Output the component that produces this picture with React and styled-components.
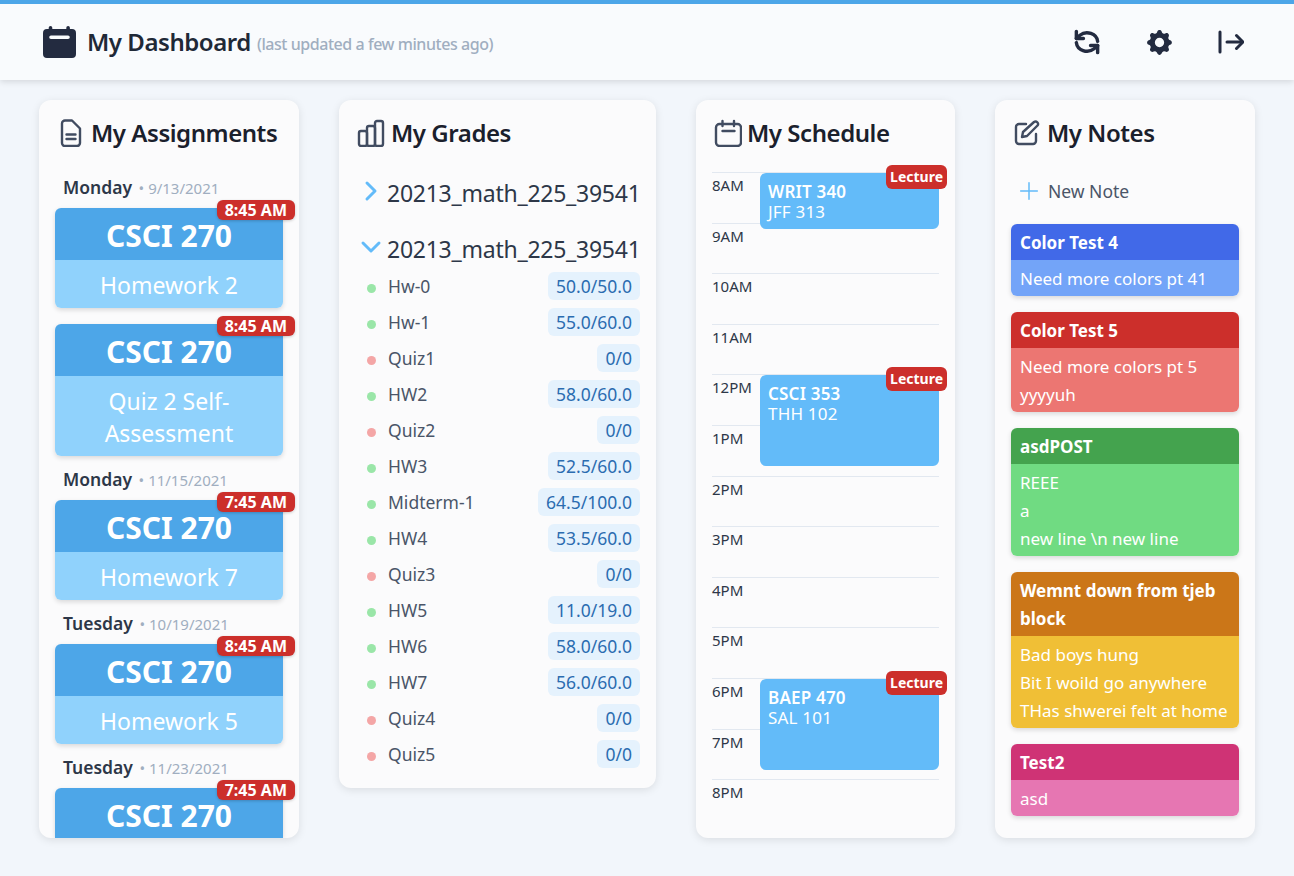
import React from "react";
import styled, { createGlobalStyle } from "styled-components";
import { HiCog } from "react-icons/hi";

const GlobalStyle = createGlobalStyle`
  html, body { margin: 0; padding: 0; }
  body {
    background: #f2f6fb;
    font-family: "Noto Sans", "Liberation Sans", sans-serif;
    color: #2d3748;
  }
`;

const Page = styled.div`
  width: 1294px;
  height: 876px;
  overflow: hidden;
  background: #f2f6fb;
`;

const Header = styled.header`
  height: 76px;
  border-top: 4px solid #4da6e8;
  background: #f9fbfd;
  box-shadow: 0 2px 6px rgba(0, 0, 0, 0.12);
  display: flex;
  align-items: center;
  justify-content: space-between;
  padding: 0 50px 0 43px;
`;

const Brand = styled.div`
  display: flex;
  align-items: center;
`;

const BrandTitle = styled.h1`
  margin: 0 0 2px 11px;
  font-size: 24px;
  font-weight: 600;
  letter-spacing: -0.45px;
  color: #1f2937;
`;

const BrandNote = styled.span`
  margin: 3px 0 0 6px;
  font-size: 16px;
  font-weight: 500;
  letter-spacing: -0.45px;
  color: #a0aec0;
`;

const Actions = styled.div`
  display: flex;
  align-items: center;
  gap: 46px;
  color: #232b40;
`;

const Columns = styled.main`
  display: grid;
  grid-template-columns: 260px 317px 259px 260px;
  gap: 40px;
  align-items: start;
  padding: 20px 39px 0;
`;

const Panel = styled.section`
  background: #fbfbfc;
  border-radius: 12px;
  box-shadow: 0 2px 8px rgba(0, 0, 0, 0.1);
  overflow: hidden;
  height: ${(p) => p.$height}px;
  padding: 18px 16px 0;
  box-sizing: border-box;
`;

const PanelTitle = styled.h2`
  margin: 0;
  height: 32px;
  box-sizing: border-box;
  padding-bottom: 2px;
  display: flex;
  align-items: center;
  gap: ${(p) => p.$gap || 7}px;
  font-size: 24px;
  font-weight: 600;
  line-height: 30px;
  letter-spacing: -0.45px;
  white-space: nowrap;
  color: #1a202c;
`;

const IconSlot = styled.span`
  display: flex;
  flex-shrink: 0;
  margin-left: ${(p) => p.$left || 0}px;
  color: #414c61;
`;

const DateRow = styled.div`
  height: 24px;
  line-height: 24px;
  margin: ${(p) => (p.$first ? "25px" : "-5px")} 0 9px 8px;
  font-size: 17.5px;
  font-weight: 600;
  color: #2d3748;
  white-space: nowrap;
`;

const DateText = styled.span`
  margin-left: 2px;
  font-size: 15px;
  font-weight: 400;
  color: #a0aec0;
`;

const TaskCard = styled.div`
  position: relative;
  margin-bottom: 16px;
  border-radius: 6px;
  box-shadow: 0 2px 5px rgba(0, 0, 0, 0.14);
  text-align: center;
  color: #fff;
`;

const TaskCourse = styled.div`
  padding: 4.5px 8px 3.5px;
  height: 44px;
  line-height: 46px;
  background: #4da6e8;
  border-radius: 6px 6px 0 0;
  font-size: 30px;
  font-weight: 700;
`;

const TaskName = styled.div`
  padding: 9px 8px 7px;
  background: #90d2fc;
  border-radius: 0 0 6px 6px;
  font-size: 23px;
  line-height: 32px;
`;

const TimeBadge = styled.span`
  position: absolute;
  z-index: 1;
  top: -8px;
  right: -12px;
  height: 20px;
  line-height: 20px;
  padding: 0 8px;
  border-radius: 6px;
  background: #cc2f2b;
  color: #fff;
  font-size: 16px;
  font-weight: 700;
  white-space: nowrap;
  box-shadow: 0 1px 3px rgba(0, 0, 0, 0.2);
`;

const CourseRow = styled.div`
  display: flex;
  align-items: center;
  height: 40px;
  margin-top: ${(p) => p.$top}px;
  font-size: 23px;
  letter-spacing: -0.25px;
  color: #2d3748;
  white-space: nowrap;
`;

const Chevron = styled.span`
  display: flex;
  flex-shrink: 0;
  justify-content: center;
  width: 32px;
  margin-bottom: 4px;
  color: #63bbf9;
`;

const GradeList = styled.div`
  display: flex;
  flex-direction: column;
  gap: 8px;
  margin-top: 3px;
`;

const GradeRow = styled.div`
  display: flex;
  align-items: center;
  height: 28px;
  font-size: 17.5px;
  color: #4a5568;
`;

const Dot = styled.span`
  width: 9px;
  height: 9px;
  margin: 5px 12px 0 12px;
  border-radius: 50%;
  background: ${(p) => (p.$ok ? "#9ae6a8" : "#f4a6a6")};
`;

const Score = styled.span`
  margin-left: auto;
  padding: 0 8px;
  line-height: 28px;
  border-radius: 6px;
  background: #e5f2fd;
  color: #2b6cb0;
`;

const Timeline = styled.div`
  position: relative;
  margin-top: 22px;
`;

const HourRow = styled.div`
  height: 50.6px;
  box-sizing: border-box;
  border-top: 1px solid #e2e8f0;
  font-size: 15px;
  line-height: 24px;
  color: #2d3748;
`;

const Lesson = styled.div`
  position: absolute;
  top: ${(p) => p.$top}px;
  left: 48px;
  right: 0;
  height: ${(p) => p.$height}px;
  box-sizing: border-box;
  padding: 9px 8px;
  background: #63bbf9;
  border-radius: 6px;
  color: #fff;
  font-size: 17px;
  letter-spacing: 0.2px;
  line-height: 20px;
`;

const LessonName = styled.div`
  font-weight: 600;
`;

const LectureBadge = styled.span`
  position: absolute;
  top: -8px;
  right: -8px;
  height: 24px;
  line-height: 24px;
  padding: 0 4px;
  border-radius: 6px;
  background: #cc2f2b;
  font-size: 14px;
  font-weight: 700;
  letter-spacing: 0;
`;

const NewNote = styled.div`
  display: flex;
  align-items: center;
  gap: 9px;
  height: 24px;
  margin: 29px 0 21px 8px;
  font-size: 17.5px;
  color: #4a5568;
`;

const PlusIcon = styled.span`
  display: flex;
  color: #63bbf9;
`;

const NoteCard = styled.div`
  margin-bottom: 16px;
  border-radius: 6px;
  overflow: hidden;
  box-shadow: 0 2px 5px rgba(0, 0, 0, 0.14);
  color: #fff;
  font-size: 17px;
  line-height: 28px;
`;

const NoteHead = styled.div`
  padding: 5px 8px 3px 9px;
  font-weight: 700;
  background: ${(p) => p.$color};
`;

const NoteBody = styled.div`
  padding: 5px 8px 3px 9px;
  background: ${(p) => p.$color};
  white-space: nowrap;
`;

const Icon = ({ w, h, vb, sw = 2, children }) => (
  <svg width={w} height={h} viewBox={vb} fill="none" stroke="currentColor" strokeWidth={sw} strokeLinecap="round" strokeLinejoin="round">
    {children}
  </svg>
);

const tasks = [
  { day: "Monday", date: "9/13/2021", time: "8:45 AM", name: "Homework 2" },
  { time: "8:45 AM", name: "Quiz 2 Self-Assessment" },
  { day: "Monday", date: "11/15/2021", time: "7:45 AM", name: "Homework 7" },
  { day: "Tuesday", date: "10/19/2021", time: "8:45 AM", name: "Homework 5" },
  { day: "Tuesday", date: "11/23/2021", time: "7:45 AM" },
];

const grades = [
  ["Hw-0", "50.0/50.0", 1], ["Hw-1", "55.0/60.0", 1], ["Quiz1", "0/0", 0], ["HW2", "58.0/60.0", 1],
  ["Quiz2", "0/0", 0], ["HW3", "52.5/60.0", 1], ["Midterm-1", "64.5/100.0", 1], ["HW4", "53.5/60.0", 1],
  ["Quiz3", "0/0", 0], ["HW5", "11.0/19.0", 1], ["HW6", "58.0/60.0", 1], ["HW7", "56.0/60.0", 1],
  ["Quiz4", "0/0", 0], ["Quiz5", "0/0", 0],
];

const hours = ["8AM", "9AM", "10AM", "11AM", "12PM", "1PM", "2PM", "3PM", "4PM", "5PM", "6PM", "7PM", "8PM"];

const lessons = [
  { name: "WRIT 340", room: "JFF 313", top: 1, height: 56 },
  { name: "CSCI 353", room: "THH 102", top: 203, height: 91 },
  { name: "BAEP 470", room: "SAL 101", top: 507, height: 91 },
];

const notes = [
  { title: "Color Test 4", lines: ["Need more colors pt 41"], head: "#4169e8", body: "#73a4f8" },
  { title: "Color Test 5", lines: ["Need more colors pt 5", "yyyyuh"], head: "#cc2f2b", body: "#ec7672" },
  { title: "asdPOST", lines: ["REEE", "a", "new line \\n new line"], head: "#44a34e", body: "#70db82" },
  { title: "Wemnt down from tjeb block", lines: ["Bad boys hung", "Bit I woild go anywhere", "THas shwerei felt at home"], head: "#cb7618", body: "#f0bf36" },
  { title: "Test2", lines: ["asd"], head: "#cf3375", body: "#e676b2" },
];

export default function App() {
  return (
    <Page>
      <GlobalStyle />
      <Header>
        <Brand>
          <svg width="33" height="32" viewBox="0 0 33 32">
            <path fill="#232b40" fillRule="evenodd" d="M7.500 0A1.800 1.800 0 0 1 9.300 1.800V3h14V1.800a1.800 1.800 0 0 1 3.600 0V3H29a4 4 0 0 1 4 4v21a4 4 0 0 1-4 4H4a4 4 0 0 1-4-4V7a4 4 0 0 1 4-4h1.700V1.800A1.800 1.800 0 0 1 7.500 0zM8 9.500a1.800 1.800 0 0 0 0 3.600h17a1.800 1.800 0 0 0 0-3.600z" />
          </svg>
          <BrandTitle>My Dashboard</BrandTitle>
          <BrandNote>(last updated a few minutes ago)</BrandNote>
        </Brand>
        <Actions>
          <Icon w={26} h={28} vb="1 1 22 22" sw={2.9}>
            <path d="M3 3v6h6" />
            <path d="M21 11.500A9 8 0 0 0 6 6.300L3 9" />
            <path d="M21 21v-6h-6" />
            <path d="M3 12.500a9 8 0 0 0 15 5.200l3-2.700" />
          </Icon>
          <HiCog size={31} style={{ margin: "0 -2.500px" }} />
          <Icon w={26} h={24} vb="0 0 26 24" sw={3}>
            <path d="M2 2v20" />
            <path d="M9 12h15" />
            <path d="M18.500 5.500L25 12l-6.500 6.500" />
          </Icon>
        </Actions>
      </Header>
      <Columns>
        <Panel $height={738}>
          <PanelTitle $gap={9}>
            <IconSlot $left={5}>
              <Icon w={22} h={28} vb="0 0 22 28" sw={2.4}>
                <path d="M5 1.500h7l8 8v14.500a3 3 0 0 1-3 3H5a3 3 0 0 1-3-3V4.500a3 3 0 0 1 3-3z" />
                <path d="M6.500 15.500h9M6.500 20h9" />
              </Icon>
            </IconSlot>
            My Assignments
          </PanelTitle>
          {tasks.map((task, i) => (
            <React.Fragment key={i}>
              {task.day && (
                <DateRow $first={i === 0}>
                  {task.day} <DateText>• {task.date}</DateText>
                </DateRow>
              )}
              <TaskCard>
                <TimeBadge>{task.time}</TimeBadge>
                <TaskCourse>CSCI 270</TaskCourse>
                {task.name && <TaskName>{task.name}</TaskName>}
              </TaskCard>
            </React.Fragment>
          ))}
        </Panel>
        <Panel $height={688}>
          <PanelTitle $gap={6}>
            <IconSlot $left={2}>
              <Icon w={28} h={28} vb="0 0 28 28" sw={2.4}>
                <rect x="2" y="12" width="8" height="15" rx="2" />
                <rect x="10" y="7" width="8" height="20" rx="2" />
                <rect x="18" y="2" width="8" height="25" rx="2" />
              </Icon>
            </IconSlot>
            My Grades
          </PanelTitle>
          <CourseRow $top={23}>
            <Chevron>
              <Icon w={24} h={24} vb="0 0 24 24" sw={3}><path d="M8 4l8 8-8 8" /></Icon>
            </Chevron>
            20213_math_225_39541
          </CourseRow>
          <CourseRow $top={16}>
            <Chevron>
              <Icon w={24} h={24} vb="0 0 24 24" sw={3}><path d="M4 8l8 8 8-8" /></Icon>
            </Chevron>
            20213_math_225_39541
          </CourseRow>
          <GradeList>
            {grades.map(([name, score, ok]) => (
              <GradeRow key={name}>
                <Dot $ok={ok} />
                {name}
                <Score>{score}</Score>
              </GradeRow>
            ))}
          </GradeList>
        </Panel>
        <Panel $height={738}>
          <PanelTitle $gap={5}>
            <IconSlot $left={2}>
              <Icon w={28} h={28} vb="0 0 28 28" sw={2.4}>
                <rect x="2" y="5" width="25" height="22" rx="3.500" />
                <path d="M8.500 2v5M20 2v5M8.500 12h12" />
              </Icon>
            </IconSlot>
            My Schedule
          </PanelTitle>
          <Timeline>
            {hours.map((h) => (
              <HourRow key={h}>{h}</HourRow>
            ))}
            {lessons.map((l) => (
              <Lesson key={l.name} $top={l.top} $height={l.height}>
                <LectureBadge>Lecture</LectureBadge>
                <LessonName>{l.name}</LessonName>
                {l.room}
              </Lesson>
            ))}
          </Timeline>
        </Panel>
        <Panel $height={738}>
          <PanelTitle $gap={7}>
            <IconSlot $left={3}>
              <Icon w={26} h={26} vb="0 0 26 26" sw={2.4}>
                <path d="M12 4H5a3 3 0 0 0-3 3v14a3 3 0 0 0 3 3h14a3 3 0 0 0 3-3v-7" />
                <path d="M20 2a2.500 2.500 0 0 1 3.500 3.500L13 16l-5 1 1-5z" />
              </Icon>
            </IconSlot>
            My Notes
          </PanelTitle>
          <NewNote>
            <PlusIcon>
              <Icon w={20} h={20} vb="0 0 24 24" sw={1.8}><path d="M12 2v20M2 12h20" /></Icon>
            </PlusIcon>
            New Note
          </NewNote>
          {notes.map((n) => (
            <NoteCard key={n.title}>
              <NoteHead $color={n.head}>{n.title}</NoteHead>
              <NoteBody $color={n.body}>
                {n.lines.map((line) => (
                  <div key={line}>{line}</div>
                ))}
              </NoteBody>
            </NoteCard>
          ))}
        </Panel>
      </Columns>
    </Page>
  );
}
